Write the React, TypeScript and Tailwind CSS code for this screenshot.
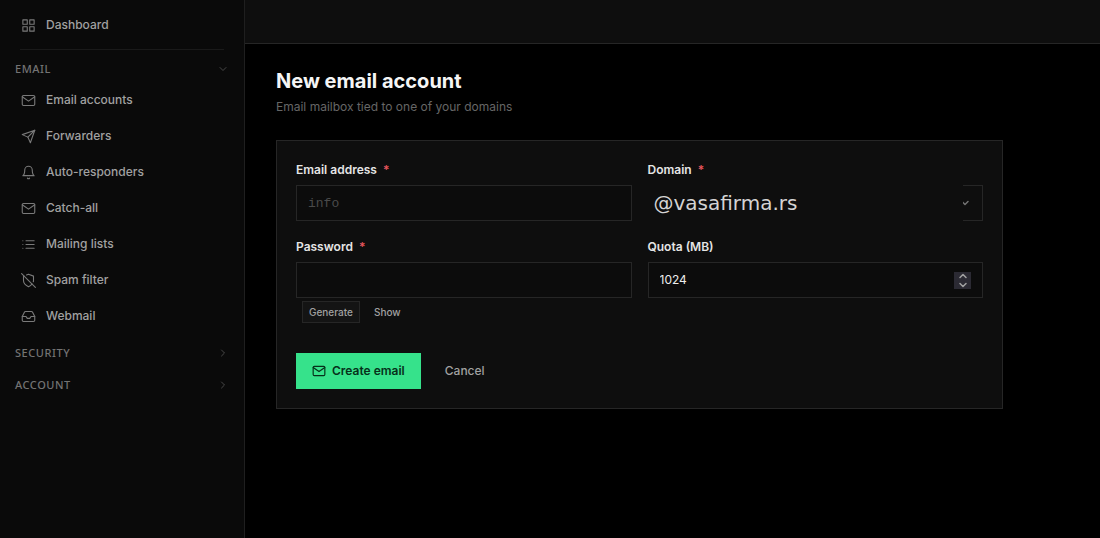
import { useState } from "react";
import type { ReactNode } from "react";

const icons: Record<string, ReactNode> = {
    grid: (
        <>
            <rect x="3" y="3" width="7" height="7" />
            <rect x="14" y="3" width="7" height="7" />
            <rect x="14" y="14" width="7" height="7" />
            <rect x="3" y="14" width="7" height="7" />
        </>
    ),
    mail: (
        <>
            <rect x="2" y="4" width="20" height="16" rx="2" />
            <path d="M22 6l-10 7L2 6" />
        </>
    ),
    send: (
        <>
            <path d="M22 2L11 13" />
            <path d="M22 2l-7 20-4-9-9-4z" />
        </>
    ),
    bell: (
        <>
            <path d="M18 8A6 6 0 0 0 6 8c0 7-3 9-3 9h18s-3-2-3-9" />
            <path d="M13.73 21a2 2 0 0 1-3.46 0" />
        </>
    ),
    list: <path d="M8 6h13M8 12h13M8 18h13M3 6h.01M3 12h.01M3 18h.01" />,
    shieldOff: (
        <>
            <path d="M19.69 14a6.9 6.9 0 0 0 .31-2V5l-8-3-3.16 1.18" />
            <path d="M4.73 4.73L4 5v7c0 6 8 10 8 10a20.29 20.29 0 0 0 5.62-4.38" />
            <path d="M1 1l22 22" />
        </>
    ),
    inbox: (
        <>
            <path d="M22 12h-6l-2 3h-4l-2-3H2" />
            <path d="M5.45 5.11L2 12v6a2 2 0 0 0 2 2h16a2 2 0 0 0 2-2v-6l-3.45-6.89A2 2 0 0 0 16.76 4H7.24a2 2 0 0 0-1.79 1.11z" />
        </>
    ),
    down: <path d="M6 9l6 6 6-6" />,
    up: <path d="M6 15l6-6 6 6" />,
    right: <path d="M9 6l6 6-6 6" />,
};

function Icon({ name, className, stroke = 1.75 }: { name: string; className: string; stroke?: number }) {
    return (
        <svg
            viewBox="0 0 24 24"
            fill="none"
            stroke="currentColor"
            strokeWidth={stroke}
            strokeLinecap="round"
            strokeLinejoin="round"
            aria-hidden="true"
            className={className}
        >
            {icons[name]}
        </svg>
    );
}

const emailLinks = [
    { icon: "mail", label: "Email accounts" },
    { icon: "send", label: "Forwarders" },
    { icon: "bell", label: "Auto-responders" },
    { icon: "mail", label: "Catch-all" },
    { icon: "list", label: "Mailing lists" },
    { icon: "shieldOff", label: "Spam filter" },
    { icon: "inbox", label: "Webmail" },
];

function NavLink({ icon, label }: { icon: string; label: string }) {
    return (
        <a href="#" className="flex h-9 items-center gap-2.5 px-[21px] text-[12px] font-medium text-[#a1a1a1] hover:text-white">
            <Icon name={icon} className="size-[15px] shrink-0 text-[#7a7a7a]" />
            {label}
        </a>
    );
}

function NavSection({ label, open, onToggle }: { label: string; open: boolean; onToggle: () => void }) {
    return (
        <button
            type="button"
            aria-expanded={open}
            onClick={onToggle}
            className="mt-1.5 flex h-[26px] w-full items-center justify-between px-[15px] font-['Noto_Sans',sans-serif] text-[11px] font-medium tracking-wider text-[#737373]"
        >
            {label}
            <Icon name={open ? "down" : "right"} className="size-3 text-[#505050]" />
        </button>
    );
}

function Label({ id, required, children }: { id: string; required?: boolean; children: ReactNode }) {
    return (
        <label htmlFor={id} className="mb-[5px] block text-[12px] leading-5 font-semibold text-[#e5e5e5]">
            {children}
            {required && <span className="ml-1.5 text-[#e5555c]">*</span>}
        </label>
    );
}

export default function App() {
    const [open, setOpen] = useState<Record<string, boolean>>({ EMAIL: true });
    const [password, setPassword] = useState("");
    const [show, setShow] = useState(false);
    const [quota, setQuota] = useState(1024);

    const toggle = (name: string) => setOpen({ ...open, [name]: !open[name] });
    const generate = () => setPassword(Math.random().toString(36).slice(2, 14));

    return (
        <div className="flex min-h-screen bg-black font-[Inter,sans-serif]">
            {/* Sidebar */}
            <nav className="w-[245px] shrink-0 border-r border-[#1f1f1f] bg-[#0a0a0a] pt-[7px]">
                <NavLink icon="grid" label="Dashboard" />
                <hr className="mx-5 mt-1.5 border-[#1a1a1a]" />
                <NavSection label="EMAIL" open={!!open.EMAIL} onToggle={() => toggle("EMAIL")} />
                {open.EMAIL && emailLinks.map((link) => <NavLink key={link.label} {...link} />)}
                <NavSection label="SECURITY" open={!!open.SECURITY} onToggle={() => toggle("SECURITY")} />
                <NavSection label="ACCOUNT" open={!!open.ACCOUNT} onToggle={() => toggle("ACCOUNT")} />
            </nav>

            <div className="min-w-0 flex-1">
                <header className="h-11 border-b border-[#262626] bg-[#0e0e0e]" />

                <main className="max-w-[789px] px-[31px] pt-[23px]">
                    <h1 className="text-[20px] leading-7 font-bold text-[#f5f5f5]">New email account</h1>
                    <p className="mt-0.5 text-[12px] leading-5 text-[#666666]">Email mailbox tied to one of your domains</p>

                    <form
                        onSubmit={(e) => e.preventDefault()}
                        className="mt-[23px] border border-[#262626] bg-[#0e0e0e] p-[19px]"
                    >
                        <div className="grid grid-cols-2 gap-4">
                            <div>
                                <Label id="address" required>Email address</Label>
                                <input
                                    id="address"
                                    placeholder="info"
                                    className="block h-9 w-full border border-[#262626] bg-[#0c0c0c] px-[11px] font-['Liberation_Mono',monospace] text-[13px] text-[#ededed] outline-none placeholder:text-[#4a4a4a]"
                                />
                            </div>

                            <div>
                                <Label id="domain" required>Domain</Label>
                                <div className="flex h-9">
                                    <select
                                        id="domain"
                                        className="min-w-0 flex-1 appearance-none bg-[#0e0e0e] px-1.5 font-['DejaVu_Sans',sans-serif] text-[20px] text-[#d4d4d4] outline-none"
                                    >
                                        <option>@vasafirma.rs</option>
                                    </select>
                                    <span className="flex w-5 items-center overflow-hidden border-y border-r border-[#262626]">
                                        <Icon name="down" stroke={3} className="-ml-1 size-3 text-[#737373]" />
                                    </span>
                                </div>
                            </div>

                            <div>
                                <Label id="password" required>Password</Label>
                                <input
                                    id="password"
                                    type={show ? "text" : "password"}
                                    value={password}
                                    onChange={(e) => setPassword(e.target.value)}
                                    className="block h-9 w-full border border-[#262626] bg-[#0c0c0c] px-[11px] text-[12px] text-[#ededed] outline-none"
                                />
                                <div className="mt-[3px] ml-1.5 flex text-[10px] font-medium text-[#a1a1a1]">
                                    <button type="button" onClick={generate} className="h-[22px] border border-[#262626] bg-[#141414] px-1.5">
                                        Generate
                                    </button>
                                    <button type="button" onClick={() => setShow(!show)} className="h-[22px] px-3.5">
                                        Show
                                    </button>
                                </div>
                            </div>

                            <div>
                                <Label id="quota">Quota (MB)</Label>
                                <div className="flex h-9 items-center border border-[#262626] bg-[#0c0c0c] px-[11px]">
                                    <input
                                        id="quota"
                                        type="number"
                                        value={quota}
                                        onChange={(e) => setQuota(Number(e.target.value))}
                                        className="min-w-0 flex-1 appearance-none bg-transparent text-[12px] text-[#ededed] outline-none [-moz-appearance:textfield] [&::-webkit-inner-spin-button]:appearance-none"
                                    />
                                    <span className="flex w-[17px] flex-col bg-[#2b2a33] text-[#a1a1a1]">
                                        <button type="button" aria-label="Increase" onClick={() => setQuota(quota + 1)} className="flex h-[9px] items-center justify-center">
                                            <Icon name="up" stroke={3} className="size-3" />
                                        </button>
                                        <button type="button" aria-label="Decrease" onClick={() => setQuota(quota - 1)} className="flex h-2 items-center justify-center">
                                            <Icon name="down" stroke={3} className="size-3" />
                                        </button>
                                    </span>
                                </div>
                            </div>
                        </div>

                        <div className="mt-[30px] flex text-[12px]">
                            <button type="submit" className="flex h-9 items-center gap-1.5 bg-[#36e28b] px-4 font-semibold text-[#06301a]">
                                <Icon name="mail" stroke={2} className="size-3.5" />
                                Create email
                            </button>
                            <button type="button" className="h-9 px-6 font-medium text-[#a1a1a1]">
                                Cancel
                            </button>
                        </div>
                    </form>
                </main>
            </div>
        </div>
    );
}
